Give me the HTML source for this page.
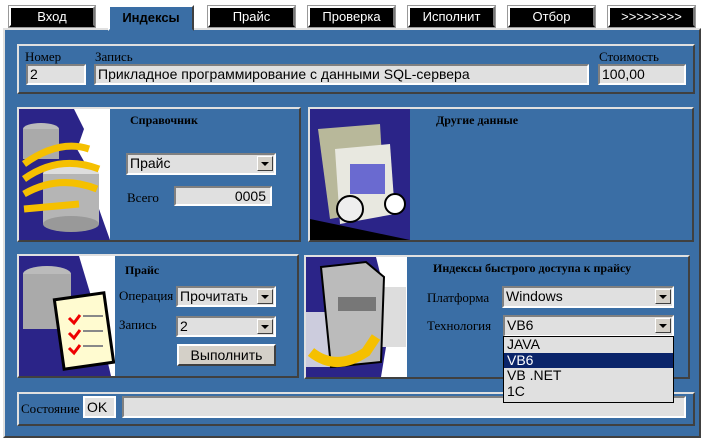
<!DOCTYPE html><html><head><meta charset="utf-8"><style>
*{margin:0;padding:0;box-sizing:border-box}
body{width:704px;height:440px;background:#fff;position:relative;overflow:hidden;font-family:"Liberation Sans",sans-serif;font-size:13px}
.a{position:absolute}
.tab{position:absolute;top:6px;height:21px;background:#000;color:#fff;text-align:center;line-height:18px;font-size:13px;border:2px solid;border-color:#fff #777 #000 #fff;outline:1px solid #999}
.main{position:absolute;left:3px;top:28px;width:698px;height:410px;background:#3a6ea5;border:2px solid;border-color:#e0e0e0 #404040 #404040 #e0e0e0}
.pan{position:absolute;border:2px solid;border-color:#e0e0e0 #404040 #404040 #e0e0e0;background:#3a6ea5}
.inp{position:absolute;background:#e0e0e0;border:2px solid;border-color:#808080 #fff #fff #808080;font-size:14px;line-height:17px;padding-left:2px;white-space:nowrap;overflow:hidden}
.lbl{position:absolute;font-family:"Liberation Serif",serif;font-size:13px;color:#000}
.b{font-weight:bold;font-size:12px}
.dd{position:absolute;right:1px;top:1px;width:16px;height:15px;background:#d4d0c8;border:1px solid;border-color:#fff #404040 #404040 #fff}
.dd:after{content:"";position:absolute;left:3px;top:5px;border:4px solid transparent;border-top:4px solid #000;border-bottom:0}
.img{position:absolute;background:#fff;overflow:hidden}
</style></head><body>
<div class="tab" style="left:9px;width:86px">Вход</div>
<div class="a" style="left:108px;top:5px;width:86px;height:26px;background:#3a6ea5;border:2px solid;border-color:#fff #404040 transparent #fff;z-index:2;text-align:center;font-weight:bold;line-height:22px;font-size:13px">Индексы</div>
<div class="tab" style="left:208px;width:87px">Прайс</div>
<div class="tab" style="left:308px;width:87px">Проверка</div>
<div class="tab" style="left:408px;width:87px">Исполнит</div>
<div class="tab" style="left:508px;width:87px">Отбор</div>
<div class="tab" style="left:608px;width:87px">&gt;&gt;&gt;&gt;&gt;&gt;&gt;&gt;</div>
<div class="main"></div>

<div class="pan" style="left:17px;top:44px;width:678px;height:50px"></div>
<div class="lbl" style="left:25px;top:49px">Номер</div>
<div class="lbl" style="left:95px;top:49px">Запись</div>
<div class="lbl" style="left:599px;top:49px">Стоимость</div>
<div class="inp" style="left:26px;top:64px;width:60px;height:21px">2</div>
<div class="inp" style="left:94px;top:64px;width:495px;height:21px">Прикладное программирование с данными SQL-сервера</div>
<div class="inp" style="left:598px;top:64px;width:88px;height:21px">100,00</div>

<div class="pan" style="left:17px;top:107px;width:284px;height:135px"></div>
<div class="img" style="left:19px;top:109px;width:91px;height:131px">
<svg width="91" height="131"><path d="M0 0H55L65 20 58 40 75 70 80 100 91 131H0Z" fill="#2b2488"/><ellipse cx="22" cy="20" rx="18" ry="6" fill="#bbb"/><rect x="4" y="20" width="36" height="30" fill="#aaa"/><ellipse cx="52" cy="65" rx="28" ry="9" fill="#ddd"/><rect x="24" y="65" width="56" height="50" fill="#b5b5b5"/><ellipse cx="52" cy="115" rx="28" ry="8" fill="#999"/><path d="M5 70Q40 45 80 60M5 85Q40 65 78 80M5 100L60 95M5 55Q40 30 70 40" stroke="#f5c000" stroke-width="7" fill="none"/></svg></div>
<div class="lbl b" style="left:130px;top:113px">Справочник</div>
<div class="inp" style="left:126px;top:153px;width:150px;height:22px">Прайс<div class="dd"></div></div>
<div class="lbl" style="left:127px;top:190px">Всего</div>
<div class="inp" style="left:174px;top:186px;width:98px;height:20px;text-align:right;padding-right:4px;line-height:16px">0005</div>

<div class="pan" style="left:308px;top:107px;width:386px;height:135px"></div>
<div class="img" style="left:310px;top:109px;width:100px;height:131px">
<svg width="100" height="131"><rect width="100" height="131" fill="#2b2488"/><path d="M8 20L70 15 75 100 20 110Z" fill="#b8b89a"/><path d="M25 40L80 35 85 105 30 115Z" fill="#e8e8e0"/><rect x="40" y="55" width="35" height="30" fill="#6a6ad0"/><circle cx="40" cy="100" r="13" fill="#eee" stroke="#000" stroke-width="2"/><circle cx="85" cy="95" r="10" fill="#fff" stroke="#000" stroke-width="2"/><path d="M0 110L100 131H0Z" fill="#000"/></svg></div>
<div class="lbl b" style="left:436px;top:113px">Другие данные</div>

<div class="pan" style="left:17px;top:254px;width:282px;height:124px"></div>
<div class="img" style="left:19px;top:256px;width:96px;height:120px">
<svg width="96" height="120"><path d="M0 0H60L75 50 85 90 92 120H0Z" fill="#2b2488"/><ellipse cx="28" cy="18" rx="24" ry="8" fill="#bbb"/><rect x="4" y="18" width="48" height="55" fill="#aaa"/><rect x="40" y="40" width="50" height="70" fill="#fffbd0" stroke="#000" stroke-width="3" transform="rotate(-8 65 75)"/><path d="M50 62l5 5 6-8M50 77l5 5 6-8M50 92l5 5 6-8" stroke="#e00" stroke-width="3" fill="none"/><path d="M64 60h20M64 75h20M64 90h20" stroke="#888" stroke-width="2"/></svg></div>
<div class="lbl b" style="left:125px;top:263px">Прайс</div>
<div class="lbl" style="left:119px;top:288px">Операция</div>
<div class="inp" style="left:176px;top:286px;width:100px;height:21px">Прочитать<div class="dd"></div></div>
<div class="lbl" style="left:119px;top:317px">Запись</div>
<div class="inp" style="left:176px;top:316px;width:100px;height:21px">2<div class="dd"></div></div>
<div class="a" style="left:177px;top:344px;width:99px;height:22px;background:#d4d0c8;border:2px solid;border-color:#fff #404040 #404040 #fff;text-align:center;line-height:18px;font-size:14px">Выполнить</div>

<div class="pan" style="left:304px;top:255px;width:386px;height:124px"></div>
<div class="img" style="left:306px;top:257px;width:101px;height:120px">
<svg width="101" height="120"><path d="M0 0H70L85 60 75 120H0Z" fill="#2b2488"/><rect x="70" y="30" width="30" height="60" fill="#ddd"/><rect x="0" y="55" width="25" height="55" fill="#ccd"/><path d="M15 10L60 5 78 20 75 105 25 110Z" fill="#bbb" stroke="#000" stroke-width="2"/><rect x="32" y="40" width="38" height="14" fill="#777"/><path d="M5 95Q30 115 60 95L70 80" stroke="#f5c000" stroke-width="10" fill="none"/></svg></div>
<div class="lbl b" style="left:433px;top:261px">Индексы быстрого доступа к прайсу</div>
<div class="lbl" style="left:427px;top:290px">Платформа</div>
<div class="inp" style="left:502px;top:286px;width:172px;height:22px">Windows<div class="dd"></div></div>
<div class="lbl" style="left:427px;top:318px">Технология</div>
<div class="inp" style="left:503px;top:315px;width:171px;height:22px">VB6<div class="dd"></div></div>
<div class="a" style="left:503px;top:336px;width:171px;height:67px;background:#e0e0e0;border:1px solid #000;font-size:14px;line-height:15.5px;z-index:3">
<div style="padding-left:3px">JAVA</div><div style="padding-left:3px;background:#0a246a;color:#fff">VB6</div><div style="padding-left:3px">VB .NET</div><div style="padding-left:3px">1C</div></div>

<div class="pan" style="left:17px;top:392px;width:678px;height:34px"></div>
<div class="lbl" style="left:21px;top:401px">Состояние</div>
<div class="inp" style="left:83px;top:396px;width:33px;height:22px;border-color:#fff;line-height:18px">OK</div>
<div class="inp" style="left:122px;top:396px;width:564px;height:22px;border-color:#808080 #fff #fff #808080"></div>
</body></html>
